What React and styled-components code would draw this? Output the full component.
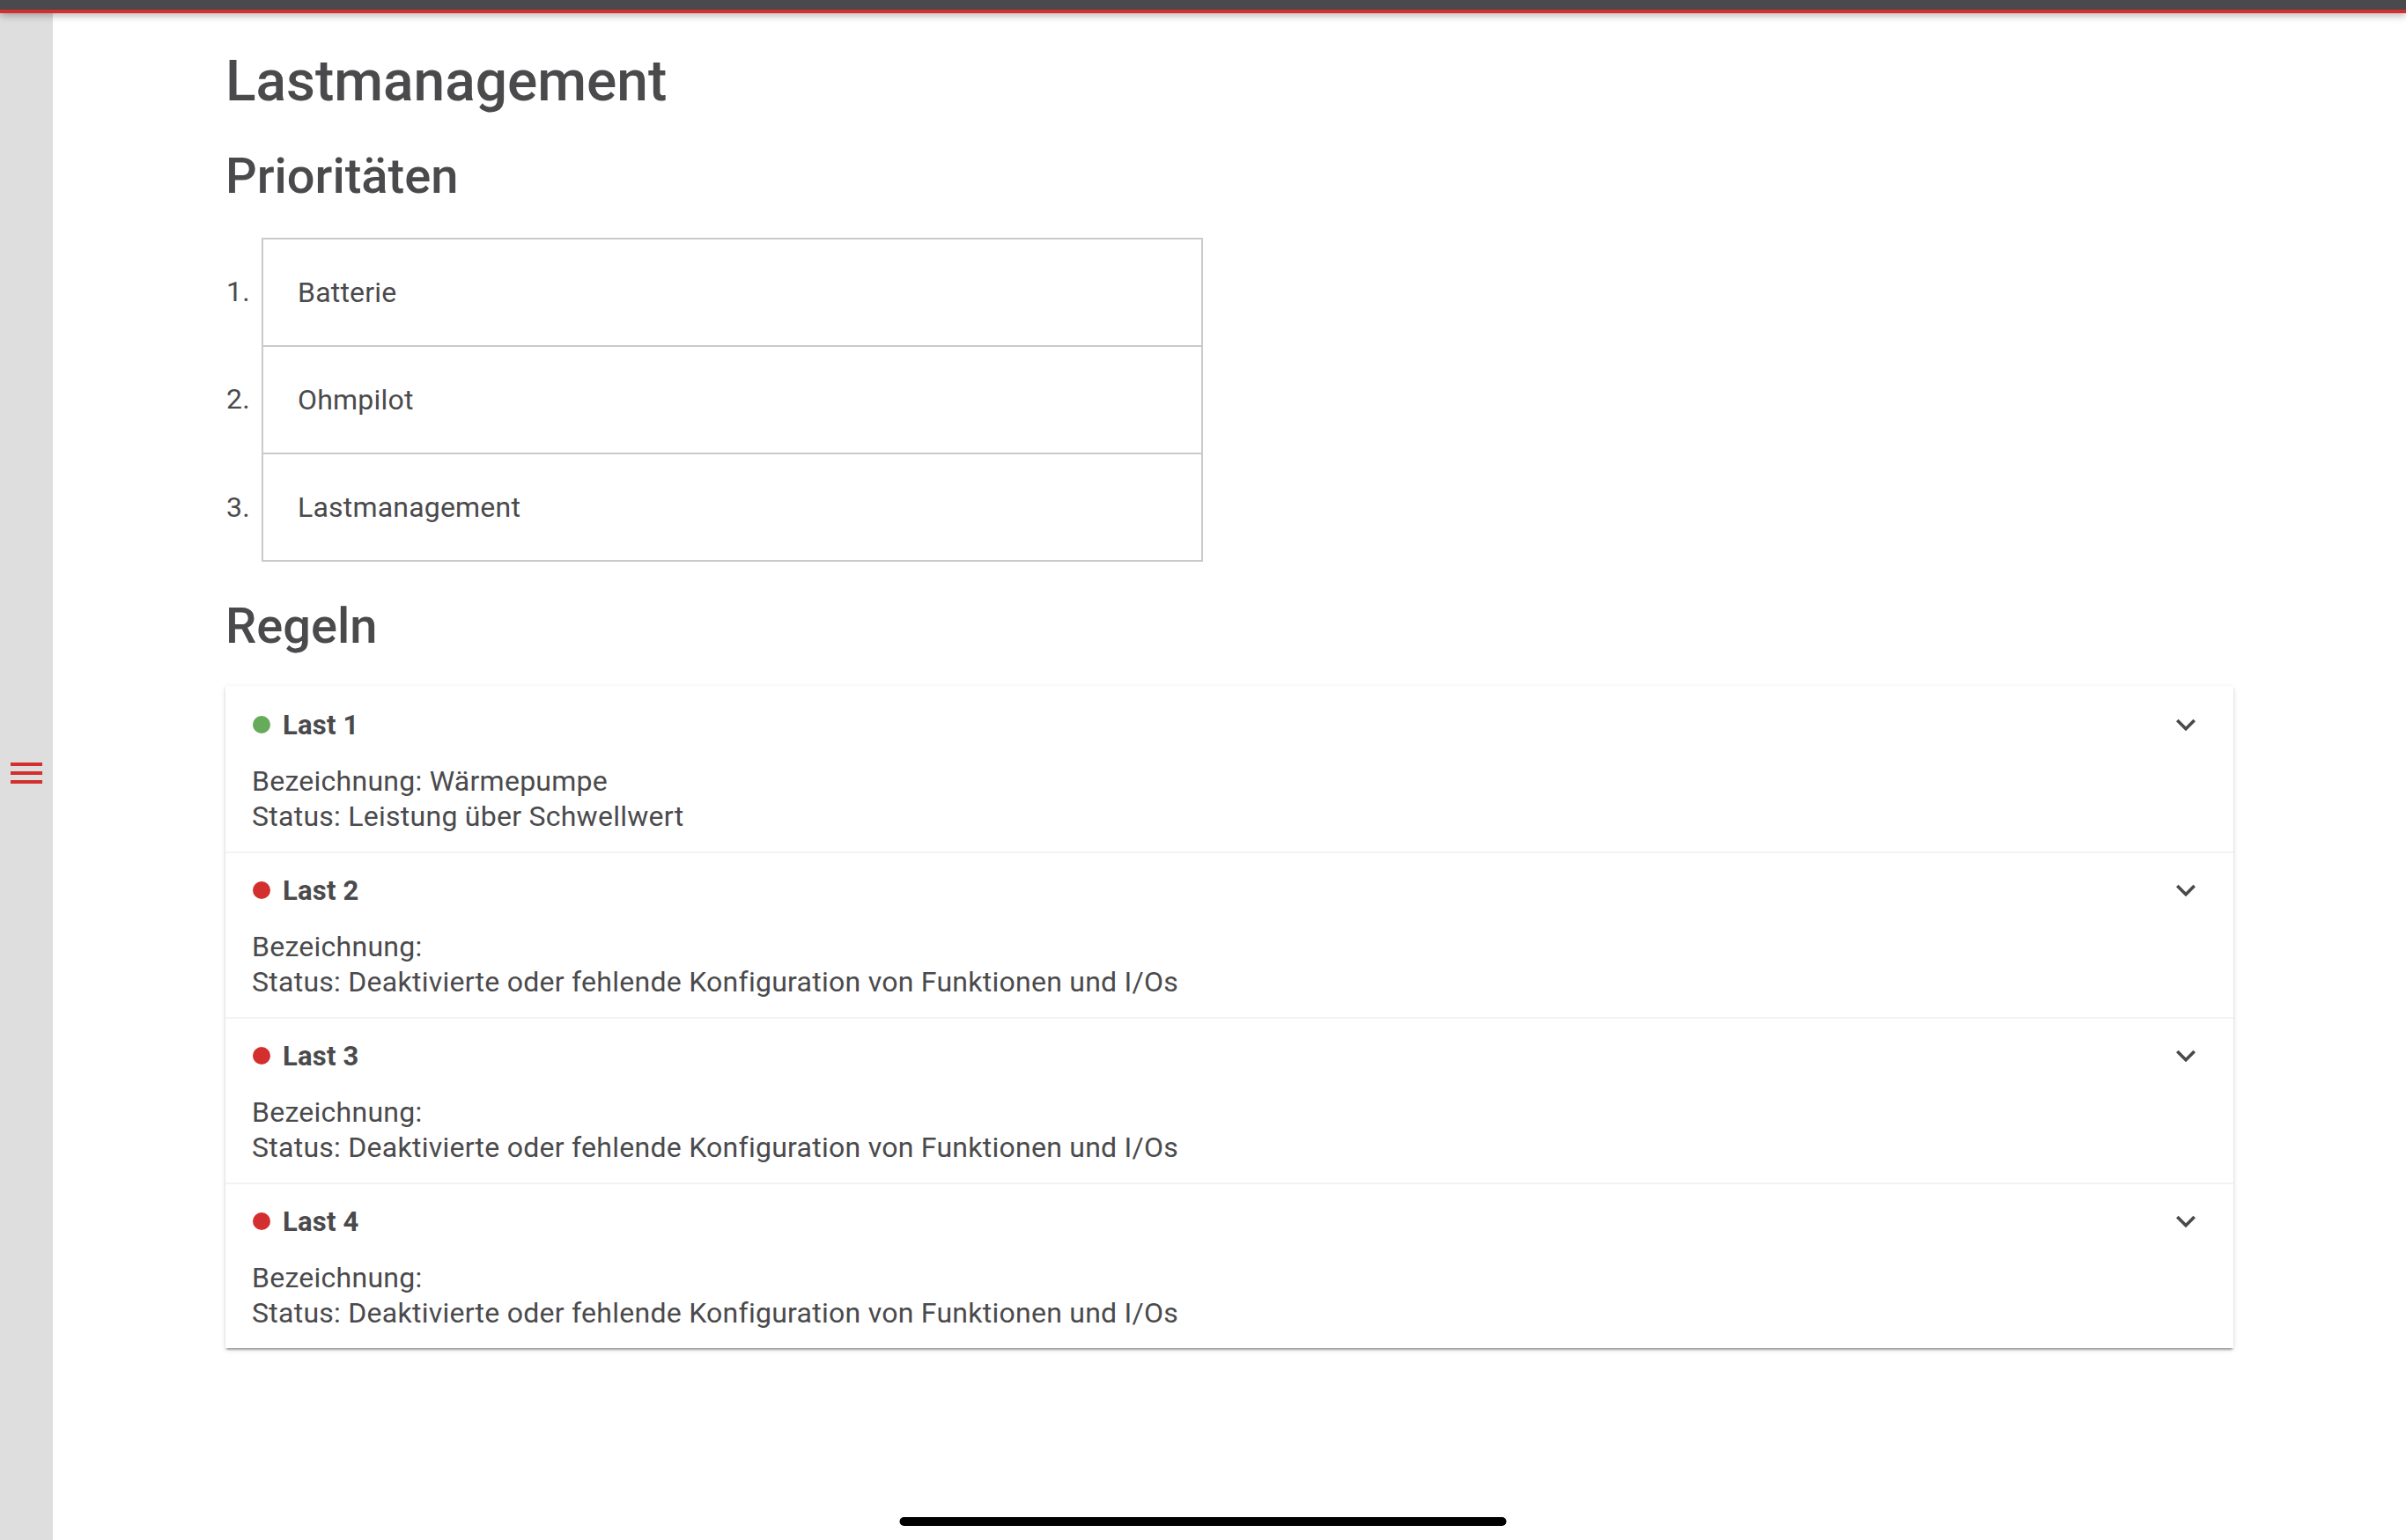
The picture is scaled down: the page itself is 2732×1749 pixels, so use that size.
import React from 'react';
import styled, { createGlobalStyle } from 'styled-components';

const GlobalStyle = createGlobalStyle`
  html, body {
    margin: 0;
    padding: 0;
    background: #ffffff;
  }
  body {
    font-family: Roboto, "Noto Sans", "Liberation Sans", sans-serif;
    color: #4a4a4c;
  }
`;

const Page = styled.div`
  display: flex;
  flex-direction: column;
  min-height: 100vh;
`;

const TopBar = styled.div`
  height: 11px;
  background: #4a4a4c;
  border-bottom: 4px solid #d32f2f;
  box-shadow: 0 3px 8px rgba(0, 0, 0, 0.28);
  position: relative;
  z-index: 2;
`;

const Body = styled.div`
  flex: 1;
  display: flex;
`;

const Sidebar = styled.div`
  width: 60px;
  flex-shrink: 0;
  background: #dedede;
  display: flex;
  align-items: center;
  justify-content: center;
  padding-bottom: 8px;
  box-sizing: border-box;
`;

const MenuButton = styled.div`
  width: 36px;
  display: flex;
  flex-direction: column;
  gap: 6px;
  cursor: pointer;
`;

const MenuLine = styled.span`
  display: block;
  height: 4px;
  background: #d32f2f;
`;

const Main = styled.main`
  flex: 1;
  padding: 40px 196px 120px 196px;
`;

const Title = styled.h1`
  margin: 0;
  font-size: 64px;
  line-height: 76.8px;
  font-weight: 500;
  color: #4a4a4c;
`;

const SectionTitle = styled.h2`
  margin: ${({ $top }) => $top}px 0 0;
  font-size: 56px;
  line-height: 67.2px;
  font-weight: 500;
  color: #4a4a4c;
`;

const PriorityList = styled.ol`
  list-style: none;
  margin: 36px 0 0;
  padding: 0;
  width: 1110px;
`;

const PriorityRow = styled.li`
  display: flex;
  align-items: stretch;
  font-size: 32px;
  letter-spacing: 0.2px;
`;

const PriorityNumber = styled.span`
  width: 41px;
  flex-shrink: 0;
  display: flex;
  align-items: center;
  padding-left: 1px;
  box-sizing: border-box;
`;

const PriorityBox = styled.div`
  flex: 1;
  height: 120px;
  display: flex;
  align-items: center;
  padding-left: 39px;
  border: 2px solid #cacaca;
  border-bottom: ${({ $last }) => ($last ? '2px solid #cacaca' : 'none')};
`;

const RuleCard = styled.div`
  margin-top: 34px;
  background: #ffffff;
  box-shadow: 0 4px 2px -2px rgba(0, 0, 0, 0.2), 0 2px 2px rgba(0, 0, 0, 0.14),
    0 2px 6px rgba(0, 0, 0, 0.12);
`;

const RuleItem = styled.div`
  padding: 24px 32px 20px 29px;
  & + & {
    border-top: 2px solid #f3f3f3;
    padding-top: 22px;
  }
`;

const RuleHeader = styled.div`
  display: flex;
  align-items: center;
  height: 40px;
`;

const StatusDot = styled.span`
  width: 20px;
  height: 20px;
  margin-left: 2px;
  border-radius: 50%;
  background: ${({ $ok }) => ($ok ? '#66ab5b' : '#d32f2f')};
  flex-shrink: 0;
`;

const RuleName = styled.span`
  margin-left: 14px;
  font-size: 31px;
  font-weight: 700;
  letter-spacing: 0.2px;
  flex: 1;
`;

const Chevron = styled.svg`
  width: 44px;
  height: 44px;
  fill: #4a4a4c;
`;

const RuleText = styled.div`
  margin-top: 24px;
  padding-left: 1px;
  font-size: 32px;
  line-height: 40px;
  letter-spacing: 0.26px;
`;

const HomeIndicator = styled.div`
  position: fixed;
  left: 50%;
  bottom: 16px;
  transform: translateX(-50%);
  width: 689px;
  height: 10px;
  border-radius: 5px;
  background: #000000;
`;

const priorities = ['Batterie', 'Ohmpilot', 'Lastmanagement'];

const missing = 'Deaktivierte oder fehlende Konfiguration von Funktionen und I/Os';

const rules = [
  { name: 'Last 1', ok: true, label: 'Wärmepumpe', status: 'Leistung über Schwellwert' },
  { name: 'Last 2', ok: false, label: '', status: missing },
  { name: 'Last 3', ok: false, label: '', status: missing },
  { name: 'Last 4', ok: false, label: '', status: missing },
];

const ExpandMore = () => (
  <Chevron viewBox="0 0 24 24">
    <path d="M16.59 8.59L12 13.17 7.41 8.59 6 10l6 6 6-6z" />
  </Chevron>
);

const App = () => {
  return (
    <Page>
      <GlobalStyle />
      <TopBar />
      <Body>
        <Sidebar>
          <MenuButton>
            <MenuLine />
            <MenuLine />
            <MenuLine />
          </MenuButton>
        </Sidebar>
        <Main>
          <Title>Lastmanagement</Title>
          <SectionTitle $top={35}>Prioritäten</SectionTitle>
          <PriorityList>
            {priorities.map((p, i) => (
              <PriorityRow key={p}>
                <PriorityNumber>{i + 1}.</PriorityNumber>
                <PriorityBox $last={i === priorities.length - 1}>{p}</PriorityBox>
              </PriorityRow>
            ))}
          </PriorityList>
          <SectionTitle $top={40}>Regeln</SectionTitle>
          <RuleCard>
            {rules.map((r) => (
              <RuleItem key={r.name}>
                <RuleHeader>
                  <StatusDot $ok={r.ok} />
                  <RuleName>{r.name}</RuleName>
                  <ExpandMore />
                </RuleHeader>
                <RuleText>
                  <div>Bezeichnung: {r.label}</div>
                  <div>Status: {r.status}</div>
                </RuleText>
              </RuleItem>
            ))}
          </RuleCard>
        </Main>
      </Body>
      <HomeIndicator />
    </Page>
  );
};

export default App;
